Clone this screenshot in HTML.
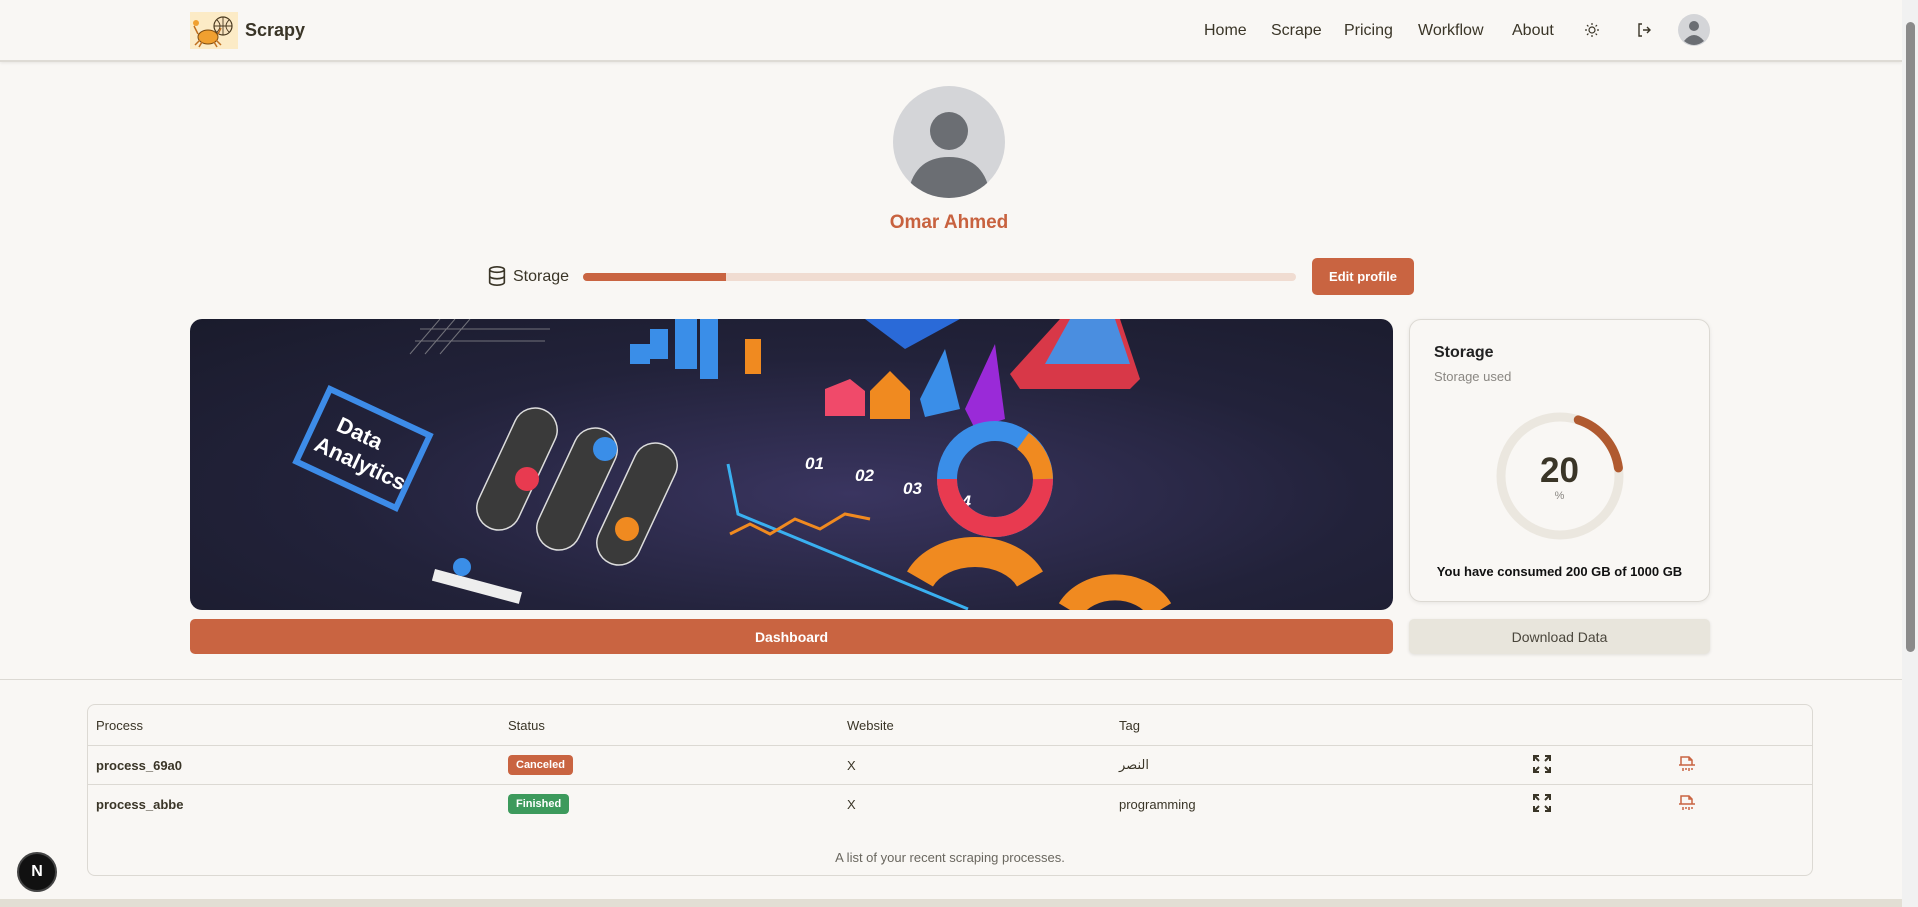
<!DOCTYPE html>
<html><head><meta charset="utf-8">
<style>
*{box-sizing:border-box;margin:0;padding:0}
body{width:1918px;height:907px;overflow:hidden;background:#f9f7f4;font-family:"Liberation Sans",sans-serif;color:#3a3527;position:relative}
.hdr{position:absolute;left:0;top:0;width:1902px;height:62px;border-bottom:2px solid #dedbd5;box-shadow:0 1px 3px rgba(0,0,0,.08)}
.nav a{position:absolute;top:22px;font-size:16px;color:#3a3527;text-decoration:none}
.scroll{position:absolute;right:0;top:0;width:16px;height:907px;background:#f1f1f1}
.scroll div{position:absolute;left:4px;top:22px;width:9px;height:630px;background:#8a8a8a;border-radius:5px}
.abs{position:absolute}
.btn{position:absolute;border-radius:5px;font-size:14px;font-weight:bold;display:flex;align-items:center;justify-content:center}
.row{position:absolute;left:0;width:100%;border-top:1.5px solid #dcd9d3}
.cell{position:absolute;font-size:13px}
.badge{position:absolute;color:#fff;font-size:11px;font-weight:bold;border-radius:4px;padding:4px 8px}
</style></head><body>
<div class="hdr">
 <div class="abs" style="left:190px;top:12px;width:48px;height:37px;background:#fcebc6">
  <svg width="48" height="37" viewBox="0 0 48 37"><circle cx="33" cy="14" r="9" fill="#f8e4c0" stroke="#4a3a20" stroke-width="1.2"/><path d="M24 14h18M33 5v18M27 8q6 6 0 12M39 8q-6 6 0 12" stroke="#4a3a20" fill="none" stroke-width=".9"/><ellipse cx="18" cy="25" rx="10" ry="7" fill="#f0a030" stroke="#7a4a10"/><path d="M8 22l-4-8M28 22l3-6M10 28l-5 5M26 28l5 5M12 30l-3 5M24 30l3 5" stroke="#c07020" stroke-width="1.5"/><circle cx="6" cy="11" r="3" fill="#f0a030"/></svg>
 </div>
 <div class="abs" style="left:245px;top:20px;font-size:18px;font-weight:bold;color:#3a3527">Scrapy</div>
 <div class="nav">
  <a style="left:1204px">Home</a><a style="left:1271px">Scrape</a><a style="left:1344px">Pricing</a><a style="left:1418px">Workflow</a><a style="left:1512px">About</a>
 </div>
 <svg class="abs" style="left:1584px;top:22px" width="16" height="16" viewBox="0 0 16 16" stroke="#3a3527" fill="none" stroke-width="1.2"><circle cx="8" cy="8" r="3"/><path d="M8 1v2M8 13v2M1 8h2M13 8h2M3 3l1.4 1.4M11.6 11.6L13 13M3 13l1.4-1.4M11.6 4.4L13 3"/></svg>
 <svg class="abs" style="left:1636px;top:22px" width="16" height="16" viewBox="0 0 16 16" stroke="#3a3527" fill="none" stroke-width="1.4"><path d="M6 2H3v12h3M7 8h7M11 5l3 3-3 3"/></svg>
 <svg class="abs" style="left:1678px;top:14px" width="32" height="32" viewBox="0 0 32 32"><circle cx="16" cy="16" r="16" fill="#d4d5d8"/><circle cx="16" cy="12" r="5" fill="#6b6e73"/><path d="M6 27q10-12 20 0q-10 8-20 0z" fill="#6b6e73"/></svg>
</div>

<svg class="abs" style="left:893px;top:86px" width="112" height="112" viewBox="0 0 112 112"><clipPath id="c"><circle cx="56" cy="56" r="56"/></clipPath><circle cx="56" cy="56" r="56" fill="#d4d5d8"/><g clip-path="url(#c)" fill="#6b6e73"><circle cx="56" cy="45" r="19"/><path d="M14 115q4-44 42-44q38 0 42 44z"/></g></svg>
<div class="abs" style="left:0;width:1898px;top:212px;text-align:center;font-size:19px;font-weight:bold;color:#c8623f">Omar Ahmed</div>

<svg class="abs" style="left:486px;top:265px" width="22" height="22" viewBox="0 0 24 24" fill="none" stroke="#3a3527" stroke-width="1.8"><ellipse cx="12" cy="5" rx="8" ry="3"/><path d="M4 5v14c0 1.7 3.6 3 8 3s8-1.3 8-3V5M4 12c0 1.7 3.6 3 8 3s8-1.3 8-3"/></svg>
<div class="abs" style="left:513px;top:268px;font-size:16px">Storage</div>
<div class="abs" style="left:583px;top:273px;width:713px;height:8px;border-radius:4px;background:#f0dcd1;overflow:hidden"><div style="width:143px;height:8px;background:#c96441"></div></div>
<div class="btn" style="left:1312px;top:258px;width:102px;height:37px;background:#c96441;color:#fff;font-size:13px">Edit profile</div>

<div class="abs" style="left:190px;top:319px;width:1203px;height:291px;border-radius:12px;overflow:hidden;background:radial-gradient(ellipse at 55% 60%,#3a3560 0%,#22223a 55%,#1a1b2c 100%)">
<svg width="1203" height="291" viewBox="0 0 1203 291">
 <g stroke="#aaa" stroke-width="1" opacity=".6"><path d="M250 0l-30 35M265 0l-30 35M280 0l-30 35M230 10h130M225 22h130"/></g>
 <g transform="translate(140,70) rotate(25)"><rect x="0" y="0" width="110" height="80" fill="none" stroke="#3d8ce8" stroke-width="6"/><text x="22" y="35" fill="#fff" font-size="22" font-weight="bold" font-family="Liberation Sans">Data</text><text x="10" y="62" fill="#fff" font-size="22" font-weight="bold" font-family="Liberation Sans">Analytics</text></g>
 <g fill="#3a3a3a" stroke="#ddd" stroke-width="1.5"><rect x="305" y="85" width="44" height="130" rx="22" transform="rotate(25 327 150)"/><rect x="365" y="105" width="44" height="130" rx="22" transform="rotate(25 387 170)"/><rect x="425" y="120" width="44" height="130" rx="22" transform="rotate(25 447 185)"/></g>
 <circle cx="337" cy="160" r="12" fill="#e83a50"/><circle cx="415" cy="130" r="12" fill="#3a8ee8"/><circle cx="437" cy="210" r="12" fill="#f08a20"/>
 <g fill="#3a8ee8"><rect x="460" y="10" width="18" height="30"/><rect x="485" y="0" width="22" height="50"/><rect x="510" y="0" width="18" height="60"/></g><rect x="440" y="25" width="20" height="20" fill="#3a8ee8"/><rect x="555" y="20" width="16" height="35" fill="#f08a20"/>
 <path d="M675 0l40 30l55-30z" fill="#2a6ad8"/>
 <path d="M870 0h60l20 60l-10 10h-110l-10-15z" fill="#d83848"/><path d="M880 0h45l15 45h-85z" fill="#4a8ee0"/>
 <path d="M635 70l25-10l15 12v25h-40z" fill="#f04a6a"/><path d="M680 72l20-20l20 20v28h-40z" fill="#f08a20"/><path d="M730 80l25-50l15 60l-35 8z" fill="#3a8ee8"/><path d="M775 90l30-65l10 75l-30 10z" fill="#9a2ad8"/>
 <g fill="#fff" font-size="17" font-style="italic" font-weight="bold" font-family="Liberation Sans"><text x="615" y="150">01</text><text x="665" y="162">02</text><text x="713" y="175">03</text><text x="762" y="188">04</text></g>
 <path d="M538 145l10 50l230 95" stroke="#3ab0f0" stroke-width="3" fill="none"/><path d="M540 215l20 -10l20 10l25-15l25 10l25-15l25 5" stroke="#f08a20" stroke-width="3" fill="none"/>
 <circle cx="805" cy="160" r="48" fill="none" stroke="#3a8ee8" stroke-width="20"/><path d="M757 160a48 48 0 0 0 96 0" fill="none" stroke="#e83a50" stroke-width="20"/><path d="M853 160a48 48 0 0 0-20-38" fill="none" stroke="#f08a20" stroke-width="20"/>
 <path d="M730 260a60 45 0 0 1 110 0" fill="none" stroke="#f08a20" stroke-width="30"/><path d="M880 291a50 40 0 0 1 90 0" fill="none" stroke="#f08a20" stroke-width="26"/>
 <rect x="245" y="250" width="90" height="12" fill="#eee" transform="rotate(15 245 250)"/><circle cx="272" cy="248" r="9" fill="#3a8ee8"/>
</svg></div>

<div class="abs" style="left:1409px;top:319px;width:301px;height:283px;border:1px solid #dcd9d3;border-radius:12px;box-shadow:0 1px 4px rgba(0,0,0,.08)">
 <div class="abs" style="left:24px;top:24px;font-size:16px;font-weight:bold;color:#222">Storage</div>
 <div class="abs" style="left:24px;top:49px;font-size:13px;color:#8a8782">Storage used</div>
 <svg class="abs" style="left:85px;top:91px" width="130" height="130" viewBox="0 0 130 130"><circle cx="65" cy="65" r="59" fill="none" stroke="#ebe7df" stroke-width="9"/><circle cx="65" cy="65" r="59" fill="none" stroke="#b05a30" stroke-width="9" stroke-linecap="round" stroke-dasharray="66 400" transform="rotate(-72 65 65)"/></svg>
 <div class="abs" style="left:0;width:299px;top:131px;text-align:center;font-size:35px;font-weight:bold;color:#3a3527">20</div>
 <div class="abs" style="left:0;width:299px;top:170px;text-align:center;font-size:11px;color:#8a8782">%</div>
 <div class="abs" style="left:0;width:299px;top:244px;text-align:center;font-size:13px;font-weight:bold;color:#111">You have consumed 200 GB of 1000 GB</div>
</div>

<div class="btn" style="left:190px;top:619px;width:1203px;height:35px;background:#c96441;color:#fff">Dashboard</div>
<div class="btn" style="left:1409px;top:619px;width:301px;height:35px;background:#e8e5dc;color:#4a463c;font-weight:normal;box-shadow:0 1px 3px rgba(0,0,0,.1)">Download Data</div>

<div class="abs" style="left:0;top:679px;width:1902px;border-top:1.5px solid #dcd9d3"></div>

<div class="abs" style="left:87px;top:704px;width:1726px;height:172px;border:1.5px solid #dcd9d3;border-radius:8px">
 <div class="cell" style="left:8px;top:13px">Process</div><div class="cell" style="left:420px;top:13px">Status</div><div class="cell" style="left:759px;top:13px">Website</div><div class="cell" style="left:1031px;top:13px">Tag</div>
 <div class="row" style="top:40px"></div>
 <div class="cell" style="left:8px;top:53px;font-weight:bold">process_69a0</div>
 <div class="badge" style="left:420px;top:50px;background:#c96441">Canceled</div>
 <div class="cell" style="left:759px;top:53px">X</div>
 <div class="cell" style="left:1031px;top:52px;font-family:'Liberation Sans','DejaVu Sans',sans-serif">النصر</div>
 <div class="row" style="top:79px"></div>
 <div class="cell" style="left:8px;top:92px;font-weight:bold">process_abbe</div>
 <div class="badge" style="left:420px;top:89px;background:#3d9a5c">Finished</div>
 <div class="cell" style="left:759px;top:92px">X</div>
 <div class="cell" style="left:1031px;top:92px">programming</div>
 <div class="cell" style="left:0;width:100%;text-align:center;top:145px;font-size:13px;color:#6a675f">A list of your recent scraping processes.</div>
 <svg class="abs" style="left:1445px;top:50px" width="18" height="18" viewBox="0 0 18 18" stroke="#3a3527" stroke-width="2" fill="none"><path d="M1 6V1h5M1 1l5 5M12 1h5v5M17 1l-5 5M1 12v5h5M1 17l5-5M17 12v5h-5M17 17l-5-5"/></svg>
 <svg class="abs" style="left:1445px;top:89px" width="18" height="18" viewBox="0 0 18 18" stroke="#3a3527" stroke-width="2" fill="none"><path d="M1 6V1h5M1 1l5 5M12 1h5v5M17 1l-5 5M1 12v5h5M1 17l5-5M17 12v5h-5M17 17l-5-5"/></svg>
 <svg class="abs" style="left:1590px;top:50px" width="18" height="18" viewBox="0 0 18 18" stroke="#c96441" stroke-width="1.5" fill="none"><path d="M3 10V2h8l3 3v5M1 10h16M11 2v3h3M5 13v3M8 13v2M11 13v3M14 13v2"/></svg>
 <svg class="abs" style="left:1590px;top:89px" width="18" height="18" viewBox="0 0 18 18" stroke="#c96441" stroke-width="1.5" fill="none"><path d="M3 10V2h8l3 3v5M1 10h16M11 2v3h3M5 13v3M8 13v2M11 13v3M14 13v2"/></svg>
</div>

<div class="abs" style="left:0;top:899px;width:1902px;height:8px;background:#e2ded4"></div>
<div class="abs" style="left:17px;top:852px;width:40px;height:40px;border-radius:50%;background:#111;border:2px solid #444;color:#fff;font-size:16px;font-weight:bold;display:flex;align-items:center;justify-content:center">N</div>
<div class="scroll"><div></div></div>
</body></html>
